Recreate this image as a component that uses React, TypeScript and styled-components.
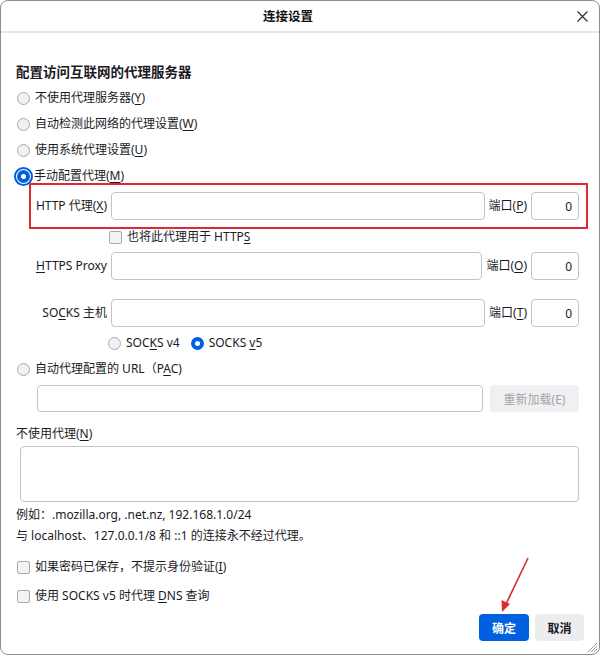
import React from "react";
import styled, { createGlobalStyle, css } from "styled-components";

const Global = createGlobalStyle`
  html, body { margin: 0; padding: 0; background: #ffffff; }
  body {
    font-family: "Noto Sans", "Noto Sans CJK SC", sans-serif;
    color: #1b1a1f;
    -webkit-font-smoothing: antialiased;
  }
  * { box-sizing: border-box; }
`;

const Window = styled.div`
  position: relative;
  width: 600px;
  height: 655px;
  border: 1px solid #8d8d8d;
  border-radius: 8px;
  background: #ffffff;
  display: flex;
  flex-direction: column;
  overflow: hidden;
`;

const TitleBar = styled.div`
  height: 32px;
  flex-shrink: 0;
  display: flex;
  align-items: center;
  border-bottom: 2px solid #e6e6e6;
`;

const Title = styled.div`
  flex: 1;
  text-align: center;
  font-family: "Noto Sans CJK SC", sans-serif;
  font-weight: 700;
  font-size: 12.5px;
  line-height: 18px;
  color: #111;
`;

const CloseButton = styled.div`
  width: 14px;
  height: 14px;
  margin-right: 10px;
  display: grid;
  place-items: center;
`;

const Content = styled.div`
  flex: 1;
  display: flex;
  flex-direction: column;
  padding: 29px 20px 0 15px;
`;

const Heading = styled.div`
  font-family: "Noto Sans CJK SC", sans-serif;
  font-weight: 700;
  font-size: 13.5px;
  line-height: 18px;
  height: 18px;
`;

const Row = styled.div<{ $mt?: number; $pl?: number; $h?: number; $gap?: number }>`
  display: flex;
  align-items: center;
  margin-top: ${(p) => p.$mt ?? 0}px;
  padding-left: ${(p) => p.$pl ?? 0}px;
  height: ${(p) => p.$h ?? 20}px;
  gap: ${(p) => p.$gap ?? 5}px;
  flex-shrink: 0;
`;

const Text = styled.span<{ $muted?: boolean }>`
  font-size: 12px;
  line-height: 20px;
  white-space: nowrap;
  color: ${(p) => (p.$muted ? "#a3a3a8" : "#1b1a1f")};
`;

const Key = styled.u`
  text-decoration: underline;
  text-underline-offset: 2px;
`;

const Radio = styled.span<{ $checked?: boolean; $focus?: boolean; $ml?: number }>`
  width: 13px;
  height: 13px;
  border-radius: 50%;
  flex-shrink: 0;
  margin-left: ${(p) => p.$ml ?? 0}px;
  border: 1px solid #a9a9ae;
  background: #f1f1f3;
  ${(p) =>
    p.$checked &&
    css`
      border: 4px solid #0061e0;
      background: #ffffff;
    `}
  ${(p) =>
    p.$focus &&
    css`
      outline: 2px solid #0061e0;
      outline-offset: 1px;
    `}
`;

const Checkbox = styled.span`
  width: 13px;
  height: 13px;
  flex-shrink: 0;
  border: 1px solid #a9a9ae;
  border-radius: 2px;
  background: #f3f3f5;
`;

const FieldLabel = styled.span`
  width: 91px;
  flex-shrink: 0;
  text-align: right;
  font-size: 12px;
  line-height: 20px;
  white-space: nowrap;
`;

const TextInput = styled.input`
  flex: 1;
  min-width: 0;
  height: 28px;
  border: 1px solid #c3c3c7;
  border-radius: 4px;
  background: #ffffff;
  font: inherit;
  font-size: 12px;
  padding: 0 6px;
  outline: none;
`;

const PortLabel = styled.span`
  flex-shrink: 0;
  font-size: 12px;
  line-height: 20px;
  white-space: nowrap;
`;

const PortInput = styled(TextInput)`
  flex: none;
  width: 48px;
  text-align: right;
  padding-right: 6px;
  color: #1b1a1f;
`;

const PacInput = styled(TextInput)`
  height: 27px;
`;

const ReloadButton = styled.div`
  width: 89px;
  height: 27px;
  flex-shrink: 0;
  border-radius: 4px;
  background: #f0f0f3;
  display: grid;
  place-items: center;
  font-size: 12px;
  color: #a3a3a8;
`;

const TextArea = styled.div`
  margin-top: 2px;
  margin-left: 4px;
  height: 56px;
  flex-shrink: 0;
  border: 1px solid #c3c3c7;
  border-radius: 4px;
`;

const Footer = styled.div`
  flex-shrink: 0;
  display: flex;
  justify-content: flex-end;
  gap: 6px;
  padding: 0 15px 13px 0;
`;

const Button = styled.div<{ $primary?: boolean; $w: number }>`
  width: ${(p) => p.$w}px;
  height: 27px;
  border-radius: 4px;
  display: grid;
  place-items: center;
  font-family: "Noto Sans CJK SC", sans-serif;
  font-weight: 700;
  font-size: 12px;
  background: ${(p) => (p.$primary ? "#0061e0" : "#ededf0")};
  color: ${(p) => (p.$primary ? "#ffffff" : "#1b1a1f")};
`;

const Highlight = styled.div`
  position: absolute;
  left: 28px;
  top: 182px;
  width: 559px;
  height: 46px;
  border: 2px solid #dc2a30;
  pointer-events: none;
`;

const Overlay = styled.svg`
  position: absolute;
  left: 0;
  top: 0;
  pointer-events: none;
`;

const Grip = styled.svg`
  position: absolute;
  right: 1px;
  bottom: 1px;
`;

export default function App() {
  return (
    <>
      <Global />
      <Window>
        <TitleBar>
          <Title>连接设置</Title>
          <CloseButton>
            <svg width="11" height="11" viewBox="0 0 11 11">
              <path d="M0.5 0.5 L10.5 10.5 M10.5 0.5 L0.5 10.5" stroke="#2b2b2b" strokeWidth="1.1" fill="none" />
            </svg>
          </CloseButton>
        </TitleBar>
        <Content>
          <Heading>配置访问互联网的代理服务器</Heading>
          <Row $mt={8} $pl={1}>
            <Radio />
            <Text>
              不使用代理服务器(<Key>Y</Key>)
            </Text>
          </Row>
          <Row $mt={6} $pl={1}>
            <Radio />
            <Text>
              自动检测此网络的代理设置(<Key>W</Key>)
            </Text>
          </Row>
          <Row $mt={6} $pl={1}>
            <Radio />
            <Text>
              使用系统代理设置(<Key>U</Key>)
            </Text>
          </Row>
          <Row $mt={6} $pl={1} $gap={4}>
            <Radio $checked $focus />
            <Text>
              手动配置代理(<Key>M</Key>)
            </Text>
          </Row>
          <Row $mt={6} $h={28} $gap={4}>
            <FieldLabel>
              HTTP 代理(<Key>X</Key>)
            </FieldLabel>
            <TextInput readOnly defaultValue="" />
            <PortLabel>
              端口(<Key>P</Key>)
            </PortLabel>
            <PortInput readOnly defaultValue="0" />
          </Row>
          <Row $mt={7} $pl={93}>
            <Checkbox />
            <Text>
              也将此代理用于 HTTP<Key>S</Key>
            </Text>
          </Row>
          <Row $mt={5} $h={28} $gap={4}>
            <FieldLabel>
              <Key>H</Key>TTPS Proxy
            </FieldLabel>
            <TextInput readOnly defaultValue="" />
            <PortLabel>
              端口(<Key>O</Key>)
            </PortLabel>
            <PortInput readOnly defaultValue="0" />
          </Row>
          <Row $mt={19} $h={28} $gap={4}>
            <FieldLabel>
              SO<Key>C</Key>KS 主机
            </FieldLabel>
            <TextInput readOnly defaultValue="" />
            <PortLabel>
              端口(<Key>T</Key>)
            </PortLabel>
            <PortInput readOnly defaultValue="0" />
          </Row>
          <Row $mt={6} $pl={92}>
            <Radio />
            <Text>
              SOC<Key>K</Key>S v4
            </Text>
            <Radio $checked $ml={6} />
            <Text>
              SOCKS <Key>v</Key>5
            </Text>
          </Row>
          <Row $mt={6} $pl={1}>
            <Radio />
            <Text>
              自动代理配置的 URL（P<Key>A</Key>C)
            </Text>
          </Row>
          <Row $mt={6} $pl={21} $h={27} $gap={7}>
            <PacInput readOnly defaultValue="" />
            <ReloadButton>重新加载(E)</ReloadButton>
          </Row>
          <Row $mt={12}>
            <Text>
              不使用代理(<Key>N</Key>)
            </Text>
          </Row>
          <TextArea />
          <Row $mt={3}>
            <Text>例如：.mozilla.org, .net.nz, 192.168.1.0/24</Text>
          </Row>
          <Row $mt={1}>
            <Text>与 localhost、127.0.0.1/8 和 ::1 的连接永不经过代理。</Text>
          </Row>
          <Row $mt={11} $pl={1}>
            <Checkbox />
            <Text>
              如果密码已保存，不提示身份验证(<Key>I</Key>)
            </Text>
          </Row>
          <Row $mt={9} $pl={1}>
            <Checkbox />
            <Text>
              使用 SOCKS v5 时代理 <Key>D</Key>NS 查询
            </Text>
          </Row>
        </Content>
        <Footer>
          <Button $primary $w={50}>确定</Button>
          <Button $w={49}>取消</Button>
        </Footer>
        <Highlight />
        <Overlay width="600" height="655" viewBox="0 0 600 655">
          <line x1="527" y1="557" x2="505" y2="603" stroke="#dc2a30" strokeWidth="1.6" />
          <polygon points="501,611 500.5,599 509,603" fill="#dc2a30" />
        </Overlay>
        <Grip width="12" height="12" viewBox="0 0 12 12">
          <path d="M11 2 L2 11 M11 5 L5 11 M11 8 L8 11" stroke="#9a9a9a" strokeWidth="1" fill="none" />
        </Grip>
      </Window>
    </>
  );
}
